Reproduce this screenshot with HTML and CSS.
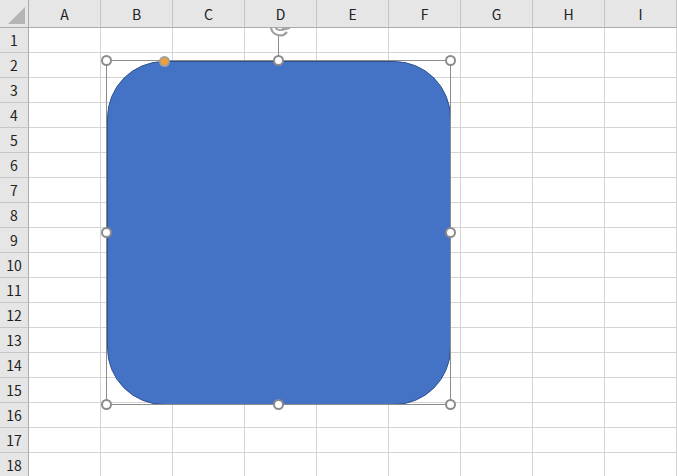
FILE: index.html
```html
<!DOCTYPE html>
<html lang="ja">
<head>
  <meta charset="UTF-8">
  <title>Sheet1</title>
  <link rel="stylesheet" href="styles.css">
</head>
<body>
  <div class="sheet">
    <div class="grid" id="grid"></div>

    <!-- 図形（角丸四角形）と選択枠 -->
    <div class="shape"></div>
    <div class="frame"></div>
    <div class="rot-line"></div>
    <svg class="rot-icon" width="26" height="10" viewBox="0 0 26 10">
      <path d="M4 -1 A9 9 0 0 0 20 5" fill="none" stroke="#a0a0a0" stroke-width="2.2"/>
      <path d="M8 -1 A5 5 0 0 0 17 1" fill="none" stroke="#a0a0a0" stroke-width="1.8"/>
      <path d="M15 3 L22 1 L21 -2" fill="none" stroke="#a0a0a0" stroke-width="2"/>
    </svg>
    <span class="handle" style="left: 106px; top: 60px"></span>
    <span class="handle" style="left: 278px; top: 60px"></span>
    <span class="handle" style="left: 450px; top: 60px"></span>
    <span class="handle" style="left: 106px; top: 232px"></span>
    <span class="handle" style="left: 450px; top: 232px"></span>
    <span class="handle" style="left: 106px; top: 404px"></span>
    <span class="handle" style="left: 278px; top: 404px"></span>
    <span class="handle" style="left: 450px; top: 404px"></span>
    <span class="handle adjust" style="left: 164px; top: 61px"></span>
  </div>

  <script>
    // 見出しとセルを作る
    const grid = document.getElementById("grid");
    const cols = ["A", "B", "C", "D", "E", "F", "G", "H", "I"];
    let html = '<div class="corner"><span class="tri"></span></div>';
    cols.forEach(c => { html += `<div class="col-head">${c}</div>`; });
    for (let r = 1; r <= 18; r++) {
      html += `<div class="row-head">${r}</div>`;
      cols.forEach(() => { html += '<div class="cell"></div>'; });
    }
    grid.innerHTML = html;
  </script>
</body>
</html>
```

FILE: styles.css
```css
body {
  margin: 0;
  padding: 0;
  background: white;
  font-family: "Noto Sans CJK JP", "Liberation Sans", sans-serif;
  overflow: hidden;
}

.sheet {
  position: relative;
  width: 677px;
  height: 476px;
  overflow: hidden;
}

.grid {
  display: grid;
  grid-template-columns: 29px repeat(9, 72px);
  grid-template-rows: 28px repeat(18, 25px);
}

.grid > div {
  box-sizing: border-box;
}

.corner {
  background: #e6e6e6;
  border-right: 1px solid #ababab;
  border-bottom: 1px solid #ababab;
  display: flex;
  align-items: flex-end;
  justify-content: flex-end;
  padding: 0 3px 3px 0;
}

.tri {
  width: 0;
  height: 0;
  border-left: 17px solid transparent;
  border-bottom: 17px solid #b4b4b4;
}

.col-head {
  background: #e6e6e6;
  border-bottom: 1px solid #ababab;
  border-right: 1px solid #c6c6c6;
  display: flex;
  align-items: center;
  justify-content: center;
  font-size: 14px;
  color: #222;
  padding-top: 1px;
}

.row-head {
  background: #e6e6e6;
  border-right: 1px solid #ababab;
  border-bottom: 1px solid #c6c6c6;
  display: flex;
  align-items: center;
  justify-content: center;
  font-size: 14px;
  color: #222;
}

.cell {
  border-right: 1px solid #d4d4d4;
  border-bottom: 1px solid #d4d4d4;
}

.shape {
  position: absolute;
  left: 107px;
  top: 61px;
  width: 344px;
  height: 344px;
  box-sizing: border-box;
  border-radius: 57px;
  background: #4472c4;
  border: 1px solid #2f528f;
}

.frame {
  position: absolute;
  left: 106px;
  top: 60px;
  width: 345px;
  height: 345px;
  box-sizing: border-box;
  border: 1px solid #8c8c8c;
}

.rot-line {
  position: absolute;
  left: 278px;
  top: 35px;
  width: 1px;
  height: 25px;
  background: #8c8c8c;
}

.rot-icon {
  position: absolute;
  left: 267px;
  top: 27px;
}

.handle {
  position: absolute;
  width: 11px;
  height: 11px;
  margin: -5px 0 0 -5px;
  box-sizing: border-box;
  border-radius: 50%;
  background: white;
  border: 2px solid #8c8c8c;
}

.handle.adjust {
  background: #f0a030;
  border-color: #a0a0a0;
}
```
